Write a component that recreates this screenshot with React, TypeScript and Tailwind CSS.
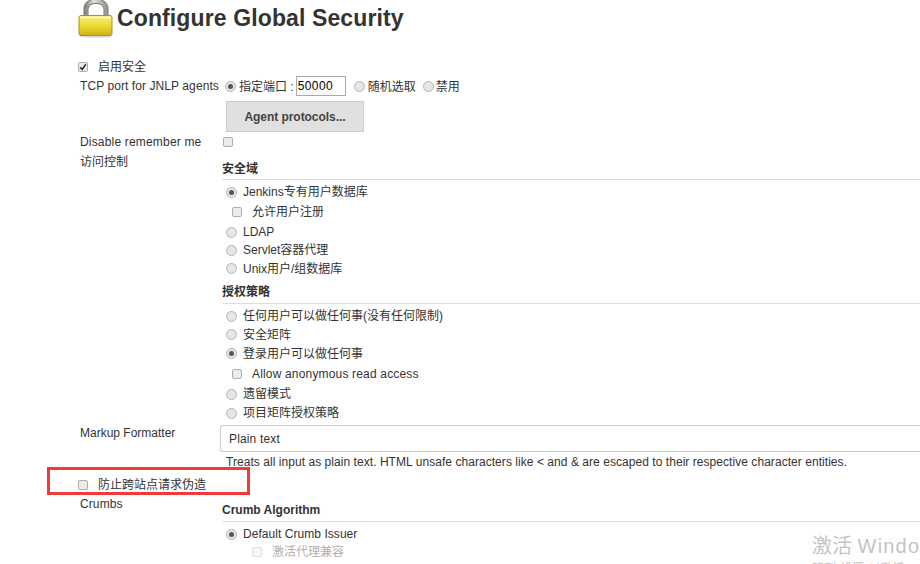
import React from "react";

const Radio = ({ on }: { on?: boolean }) => (
  <span className="flex h-[11px] w-[11px] shrink-0 items-center justify-center rounded-full border border-[#b5b5b5] bg-[#e6e6e6]">
    {on && <span className="h-[5px] w-[5px] rounded-full bg-[#555]" />}
  </span>
);

const Check = ({ on }: { on?: boolean }) => (
  <span className="flex h-[10px] w-[10px] shrink-0 items-center justify-center rounded-[2px] border border-[#aeaeae] bg-[#ececec]">
    {on && (
      <svg viewBox="0 0 10 10" className="h-[8px] w-[8px]">
        <path d="M1.5 5.5 L4 8 L8.5 1.5" fill="none" stroke="#333" strokeWidth="2" />
      </svg>
    )}
  </span>
);

const Lock = () => (
  <svg viewBox="0 0 36 38" className="h-[38px] w-[36px] shrink-0">
    <defs>
      <linearGradient id="body" x1="0" y1="0" x2="0" y2="1">
        <stop offset="0" stopColor="#f7ee7a" />
        <stop offset="0.55" stopColor="#ecd92e" />
        <stop offset="1" stopColor="#cdb018" />
      </linearGradient>
      <linearGradient id="shackle" x1="0" y1="0" x2="1" y2="0">
        <stop offset="0" stopColor="#8b8b85" />
        <stop offset="0.4" stopColor="#e2e2dc" />
        <stop offset="1" stopColor="#9a9a94" />
      </linearGradient>
    </defs>
    <ellipse cx="18" cy="36.5" rx="17" ry="1.5" fill="#ddd" />
    <path d="M8 17 V9 C8 -1.5 28 -1.5 28 9 V17" fill="none" stroke="#77776f" strokeWidth="5" />
    <path d="M8 17 V9 C8 -1.5 28 -1.5 28 9 V17" fill="none" stroke="url(#shackle)" strokeWidth="3.4" />
    <rect x="1" y="15.5" width="33" height="20" rx="2" fill="url(#body)" stroke="#a8921a" />
    <rect x="2" y="16.5" width="31" height="2" fill="#fbf6a8" />
  </svg>
);

const Heading = ({ children, className }: { children: React.ReactNode; className: string }) => (
  <div className={`flex items-center border-b border-[#ddd] font-bold ${className}`}>{children}</div>
);

const Option = ({ on, children, className }: { on?: boolean; children: React.ReactNode; className: string }) => (
  <div className={`flex items-center gap-[6px] pl-[4px] ${className}`}>
    <Radio on={on} />
    <span>{children}</span>
  </div>
);

const SubCheck = ({ children, className }: { children: React.ReactNode; className: string }) => (
  <div className={`flex items-center gap-[10px] pl-[10px] ${className}`}>
    <Check />
    <span>{children}</span>
  </div>
);

export default function App() {
  return (
    <div
      className="relative h-[564px] w-[920px] overflow-hidden bg-white pl-[78px] text-[12px] text-[#333]"
      style={{ fontFamily: '"Liberation Sans", "Noto Sans CJK SC", sans-serif' }}
    >
      <div className="flex h-[37px] items-start gap-[3px]">
        <Lock />
        <h1 className="mt-[3px] text-[23px] leading-[30px] font-bold tracking-[0.12px] text-[#333]">
          Configure Global Security
        </h1>
      </div>

      <div className="mt-[20px] flex h-[19px] items-center gap-[10px]">
        <Check on />
        <span>启用安全</span>
      </div>

      <div className="flex h-[20px] items-center pl-[2px]">
        <span className="w-[145px] tracking-[0.08px] whitespace-nowrap">TCP port for JNLP agents</span>
        <Radio on />
        <span className="ml-[3px] pt-[1px]">指定端口 :</span>
        <input
          readOnly
          value="50000"
          className="ml-[2px] h-[20px] w-[50px] border border-[#aaa] pl-[1px] text-[12px] tracking-[0.4px] text-black"
        />
        <span className="ml-[8px]">
          <Radio />
        </span>
        <span className="ml-[3px] pt-[1px]">随机选取</span>
        <span className="ml-[7px]">
          <Radio />
        </span>
        <span className="ml-[2px] pt-[1px]">禁用</span>
      </div>

      <div className="mt-[5px] ml-[148px] flex h-[31px] w-[138px] items-center justify-center border border-[#ccc] bg-[#e0e0e0] font-bold tracking-[-0.05px] text-[#444]">
        Agent protocols...
      </div>

      <div className="flex h-[19px] items-center pl-[2px]">
        <span className="w-[143px] tracking-[0.18px]">Disable remember me</span>
        <Check />
      </div>

      <div className="flex">
        <div className="w-[144px] pt-[2px] pl-[2px] leading-[18px]">访问控制</div>
        <div className="flex-1">
          <Heading className="h-[29px] pt-[8px]">安全域</Heading>
          <div className="h-[2px]" />
          <Option on className="h-[20px]">Jenkins专有用户数据库</Option>
          <SubCheck className="h-[20px] pl-[10px]">允许用户注册</SubCheck>
          <Option className="h-[20px]">LDAP</Option>
          <Option className="h-[16px]">Servlet容器代理</Option>
          <Option className="h-[21px]">Unix用户/组数据库</Option>
          <Heading className="mt-[3px] h-[22px] pb-[1px]">授权策略</Heading>
          <div className="h-[2px]" />
          <Option className="h-[20px]">任何用户可以做任何事(没有任何限制)</Option>
          <Option className="h-[17px]">安全矩阵</Option>
          <Option on className="h-[21px]">登录用户可以做任何事</Option>
          <SubCheck className="h-[20px] tracking-[0.17px]">Allow anonymous read access</SubCheck>
          <Option className="h-[20px]">遗留模式</Option>
          <Option className="h-[18px]">项目矩阵授权策略</Option>
        </div>
      </div>

      <div className="mt-[3px] flex">
        <div className="w-[142px] pl-[2px] leading-[17px]">Markup Formatter</div>
        <div className="flex-1">
          <div className="flex h-[27px] items-center rounded-l-[3px] border border-r-0 border-[#ccc] pl-[8px] tracking-[0.15px]">
            Plain text
          </div>
          <div className="flex h-[20px] items-center pl-[6px] tracking-[0.05px]">
            Treats all input as plain text. HTML unsafe characters like &lt; and &amp; are escaped to their respective character entities.
          </div>
        </div>
      </div>

      <div className="mt-[5px] flex h-[16px] items-center gap-[10px]">
        <Check />
        <span>防止跨站点请求伪造</span>
      </div>

      <div className="flex">
        <div className="w-[144px] pt-[3px] pl-[2px] leading-[16px] tracking-[0.1px]">Crumbs</div>
        <div className="flex-1">
          <Heading className="h-[29px] pt-[6px]">Crumb Algorithm</Heading>
          <div className="h-[1px]" />
          <Option on className="h-[22px] tracking-[0.05px]">Default Crumb Issuer</Option>
          <div className="flex h-[13px] items-center gap-[10px] pl-[30px] opacity-40">
            <Check />
            <span>激活代理兼容</span>
          </div>
        </div>
      </div>

      <div className="absolute top-[467px] left-[47px] h-[28px] w-[203px] border-[3px] border-[#f23a3a]" />

      <div className="absolute top-[532px] left-[812px] text-[20px] leading-[28px] whitespace-nowrap text-[#c4c4c4]">
        激活 <span className="tracking-[1.2px]">Windows</span>
        <div className="mt-[2px] text-[12px] leading-[14px]">转到"设置"以激活 Windows。</div>
      </div>
    </div>
  );
}
